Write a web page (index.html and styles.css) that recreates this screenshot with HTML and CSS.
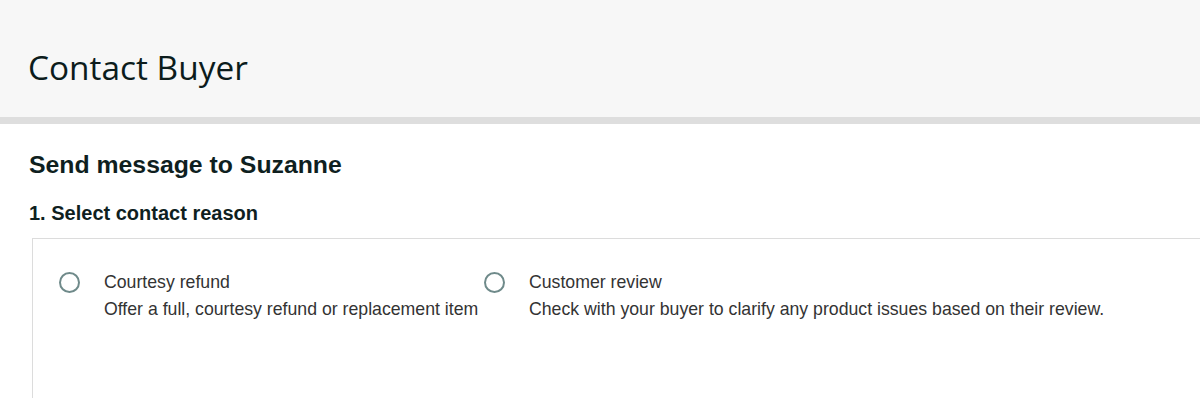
FILE: index.html
```html
<!DOCTYPE html>
<html lang="en">
<head>
<meta charset="utf-8">
<title>Contact Buyer</title>
<link rel="stylesheet" href="styles.css">
</head>
<body>
  <header class="page-header">
    <h1 class="page-title">Contact Buyer</h1>
  </header>
  <main class="content">
    <h2 class="send-title">Send message to Suzanne</h2>
    <h3 class="step-title">1. Select contact reason</h3>
    <div class="reason-card">
      <div class="options">
        <label class="option option-first">
          <span class="radio"></span>
          <span class="option-text">
            <span class="option-name">Courtesy refund</span>
            <span class="option-desc">Offer a full, courtesy refund or replacement item</span>
          </span>
        </label>
        <label class="option">
          <span class="radio"></span>
          <span class="option-text">
            <span class="option-name">Customer review</span>
            <span class="option-desc">Check with your buyer to clarify any product issues based on their review.</span>
          </span>
        </label>
      </div>
    </div>
  </main>
</body>
</html>
```
FILE: styles.css
```css
html, body {
  margin: 0;
  padding: 0;
  background: #ffffff;
  overflow: hidden;
}

.page-header {
  height: 72px;
  padding: 45px 0 0 28px;
  background: #f7f7f7;
  border-bottom: 7px solid #dedede;
}

.page-title {
  margin: 0;
  font-family: "Open Sans", sans-serif;
  font-weight: 400;
  font-size: 33.4px;
  line-height: 45px;
  color: #0c1c1c;
}

.content {
  padding: 26px 0 0 29px;
}

.send-title {
  margin: 0;
  font-family: "Liberation Sans", Arial, sans-serif;
  font-weight: 700;
  font-size: 24.8px;
  line-height: 29px;
  color: #0f1f1f;
}

.step-title {
  margin: 23px 0 0 0;
  font-family: "Liberation Sans", Arial, sans-serif;
  font-weight: 700;
  font-size: 20px;
  line-height: 23px;
  color: #0f1f1f;
}

.reason-card {
  margin: 13px -10px 0 3px;
  height: 170px;
  border: 1px solid #dcdcdc;
  padding: 30px 0 0 26px;
}

.options {
  display: flex;
}

.option {
  display: flex;
  align-items: flex-start;
  gap: 24px;
  font-family: "Liberation Sans", Arial, sans-serif;
  font-size: 17.7px;
  line-height: 27px;
  color: #333333;
}

.option-first {
  flex: 0 0 425px;
}

.radio {
  flex: 0 0 auto;
  width: 17px;
  height: 17px;
  margin-top: 3px;
  border: 2px solid #6f8a8a;
  border-radius: 50%;
  background: #ffffff;
}

.option-text {
  display: flex;
  flex-direction: column;
}
```
